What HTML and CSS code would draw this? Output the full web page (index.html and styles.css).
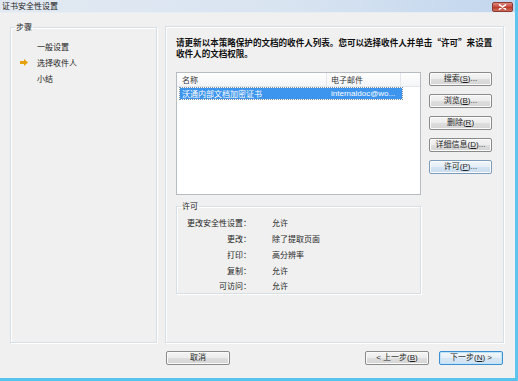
FILE: index.html
```html
<!DOCTYPE html>
<html lang="zh-CN">
<head>
<meta charset="utf-8">
<title>证书安全性设置</title>
<link rel="stylesheet" href="styles.css">
</head>
<body>
<div class="window">
  <div class="titlebar">
    <span class="title">证书安全性设置</span>
    <span class="close"><svg width="9" height="6" viewBox="0 0 9 6"><path d="M1.5 0.8 L7.5 5.2 M7.5 0.8 L1.5 5.2" stroke="#fff" stroke-width="1.6" stroke-linecap="round"/></svg></span>
  </div>
  <div class="main">
    <fieldset class="steps">
      <legend class="legend">步骤</legend>
      <ul class="step-list">
        <li class="step"><span class="marker"></span><span>一般设置</span></li>
        <li class="step"><span class="marker"><svg width="8" height="7" viewBox="0 0 8 7"><path d="M0 2 H4 V0 L8 3.5 L4 7 V5 H0 Z" fill="#e7a10c"/></svg></span><span>选择收件人</span></li>
        <li class="step"><span class="marker"></span><span>小结</span></li>
      </ul>
    </fieldset>
    <div class="content">
      <p class="intro">请更新以本策略保护的文档的收件人列表。您可以选择收件人并单击“许可”来设置<br>收件人的文档权限。</p>
      <div class="list-row">
        <div class="listbox">
          <div class="list-head">
            <span class="col-name">名称</span>
            <span class="col-mail">电子邮件</span>
            <span class="col-rest"></span>
          </div>
          <div class="list-item selected">
            <span class="col-name">沃通内部文档加密证书</span>
            <span class="col-mail">internaldoc@wo...</span>
          </div>
        </div>
        <div class="side-buttons">
          <button class="btn">搜索(<u>S</u>)...</button>
          <button class="btn">浏览(<u>B</u>)...</button>
          <button class="btn">删除(<u>R</u>)</button>
          <button class="btn">详细信息(<u>D</u>)...</button>
          <button class="btn hot">许可(<u>P</u>)...</button>
        </div>
      </div>
      <fieldset class="perms">
        <legend class="legend">许可</legend>
        <dl class="perm-grid">
          <dt>更改安全性设置：</dt><dd>允许</dd>
          <dt>更改：</dt><dd>除了提取页面</dd>
          <dt>打印：</dt><dd>高分辨率</dd>
          <dt>复制：</dt><dd>允许</dd>
          <dt>可访问：</dt><dd>允许</dd>
        </dl>
      </fieldset>
    </div>
  </div>
  <div class="footer">
    <button class="btn">取消</button>
    <div class="nav">
      <button class="btn">&lt; 上一步(<u>B</u>)</button>
      <button class="btn default">下一步(<u>N</u>) &gt;</button>
    </div>
  </div>
</div>
</body>
</html>
```
FILE: styles.css
```css
* { box-sizing: border-box; }
html, body { margin: 0; padding: 0; }
body {
  width: 518px;
  height: 381px;
  overflow: hidden;
  font-family: "Liberation Sans", "Noto Sans CJK SC", sans-serif;
  font-size: 8px;
  color: #1e1e1e;
  background: #f0f0f0;
}
.window {
  width: 518px;
  height: 381px;
  display: flex;
  flex-direction: column;
  background: #f0f0f0;
  border-right: 3px solid #5cc6ee;
  border-bottom: 3px solid #55c3ec;
}
.titlebar {
  height: 13px;
  display: flex;
  align-items: center;
  justify-content: space-between;
  padding: 0 2px 0 2px;
  background: linear-gradient(to right, #e2e9f2 0%, #d9e4f1 55%, #c2d6ee 100%);
  border-bottom: 1px solid #e9eef4;
}
.title {
  font-family: "Noto Sans CJK SC", sans-serif;
  font-size: 8px;
  line-height: 10px;
  color: #222;
}
.close {
  width: 21px;
  height: 10px;
  margin-top: 1px;
  border: 1px solid #8d3a32;
  border-radius: 2px;
  background: linear-gradient(#e0887c, #c4483a 50%, #b83526 51%, #d2705c);
  display: flex;
  align-items: center;
  justify-content: center;
}
.close svg { display: block; }
.main {
  display: flex;
  align-items: flex-start;
  gap: 8px;
  padding: 9px 0 0 10px;
}
fieldset {
  margin: 0;
  padding: 0;
  min-width: 0;
  border: 1px solid #d5dfe5;
  box-shadow: inset 1px 1px 0 #fff, 1px 1px 0 #fff;
}
.legend {
  padding: 0 1px;
  margin-left: 4px;
  font-family: "Noto Sans CJK SC", sans-serif;
  font-size: 8px;
  line-height: 10px;
  color: #222;
}
.steps {
  width: 147px;
  height: 321px;
}
.step-list {
  list-style: none;
  margin: 0;
  padding: 6px 0 0 0;
}
.step {
  display: flex;
  align-items: center;
  height: 16px;
  font-family: "Noto Sans CJK SC", sans-serif;
}
.marker {
  width: 26px;
  padding-left: 9px;
  display: flex;
  align-items: center;
}
.marker svg { display: block; }
.content {
  margin-top: 4px;
  width: 339px;
  height: 317px;
  border: 1px solid #d5dfe5;
  box-shadow: inset 1px 1px 0 #fff, 1px 1px 0 #fff;
  padding: 10px 0 0 10px;
}
.intro {
  margin: 0;
  font-family: "Noto Sans CJK SC", sans-serif;
  font-weight: bold;
  font-size: 8.55px;
  line-height: 11px;
  white-space: nowrap;
  color: #111;
}
.list-row {
  display: flex;
  gap: 8px;
  margin-top: 13px;
}
.listbox {
  width: 245px;
  height: 123px;
  background: #fff;
  border: 1px solid #b7bcc3;
}
.list-head {
  display: flex;
  height: 14px;
  background: linear-gradient(#ffffff, #f4f5f7);
  border-bottom: 1px solid #e3e6ea;
  align-items: center;
  color: #333;
}
.list-head .col-name { width: 150px; padding-left: 5px; border-right: 1px solid #e3e6ea; height: 100%; display: flex; align-items: center; }
.list-head .col-mail { width: 74px; padding-left: 4px; border-right: 1px solid #e3e6ea; height: 100%; display: flex; align-items: center; }
.list-head .col-rest { flex: 1; }
.list-head span { font-family: "Noto Sans CJK SC", sans-serif; }
.list-item {
  display: flex;
  align-items: center;
  height: 11px;
  margin: 1px 0 0 3px;
  width: 222px;
}
.selected {
  background: #3d95ee;
  color: #fff;
  outline: 1px dotted #7a8ea8;
}
.list-item .col-name { width: 147px; padding-left: 2px; font-family: "Noto Sans CJK SC", sans-serif; }
.list-item .col-mail { padding-left: 4px; white-space: nowrap; }
.side-buttons {
  display: flex;
  flex-direction: column;
  gap: 8px;
}
.btn {
  width: 63px;
  height: 14px;
  padding: 0;
  margin: 0;
  font-family: "Liberation Sans", "Noto Sans CJK SC", sans-serif;
  font-size: 8px;
  line-height: 12px;
  color: #1e1e1e;
  border: 1px solid #8a8a8a;
  border-radius: 2px;
  background: linear-gradient(#f4f4f4 0%, #ececec 50%, #dedede 51%, #d4d4d4 100%);
  box-shadow: inset 0 0 0 1px #fbfbfb;
  white-space: nowrap;
}
.btn u { text-underline-offset: 1px; }
.btn.hot {
  border-color: #7c9cbc;
  background: linear-gradient(#f0f6fb 0%, #e4eef7 50%, #d4e4f1 51%, #c9dcee 100%);
}
.btn.default {
  border-color: #3c8fd0;
  background: linear-gradient(#f1f7fc 0%, #e6f0f9 50%, #d6e6f4 51%, #cfe2f3 100%);
  box-shadow: inset 0 0 0 1px #bfe4f8;
}
.perms {
  margin-top: 6px;
  width: 245px;
  height: 93px;
}
.perm-grid {
  margin: 0;
  padding: 4px 0 0 0;
  display: grid;
  grid-template-columns: 74px auto;
  column-gap: 21px;
  grid-auto-rows: 15.75px;
  align-items: center;
  font-family: "Noto Sans CJK SC", sans-serif;
}
.perm-grid dt { text-align: right; white-space: nowrap; }
.perm-grid dd { margin: 0; white-space: nowrap; }
.footer {
  display: flex;
  justify-content: space-between;
  align-items: center;
  padding: 8px 12px 0 166px;
}
.nav {
  display: flex;
  gap: 10px;
}
.footer .btn { width: 64px; }
```
